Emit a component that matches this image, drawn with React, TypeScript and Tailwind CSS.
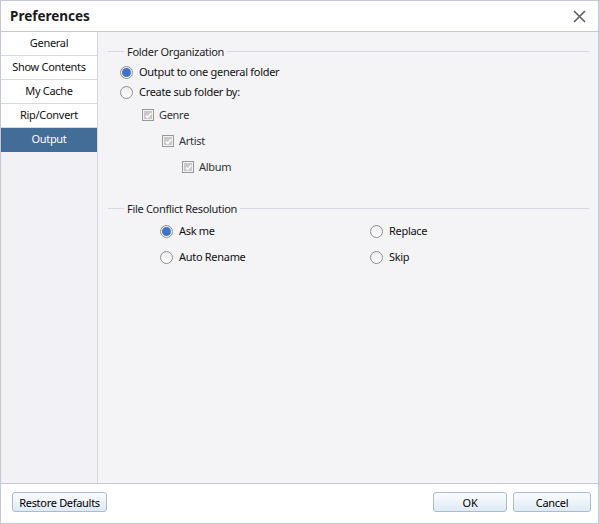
import React from 'react';

const font = { fontFamily: '"Noto Sans", "Liberation Sans", sans-serif' };

function Radio({ checked, label }: { checked?: boolean; label: string }) {
  return (
    <div className="flex items-center h-[20px]">
      <span className="w-[13px] h-[13px] rounded-full border border-[#8e8f8f] bg-gradient-to-b from-[#ececec] to-white flex items-center justify-center">
        {checked && <span className="w-[9px] h-[9px] rounded-full bg-[#3f74c9]" />}
      </span>
      <span className="ml-[6px] text-[11px] tracking-[-0.3px] text-[#111] whitespace-nowrap">{label}</span>
    </div>
  );
}

function Check({ label }: { label: string }) {
  return (
    <div className="flex items-center h-[20px]">
      <span className="w-[12px] h-[12px] border border-[#999] bg-[#f2f2f2] p-px flex">
        <span className="flex-1 bg-[#c9c9c9] flex items-center justify-center">
          <svg width="7" height="7" viewBox="0 0 7 7">
            <path d="M0.8 3.6 L2.7 5.4 L6.2 1.2" fill="none" stroke="#ffffff" strokeWidth="1.5" />
          </svg>
        </span>
      </span>
      <span className="ml-[5px] text-[11px] tracking-[-0.3px] text-[#333] whitespace-nowrap">{label}</span>
    </div>
  );
}

function Legend({ title }: { title: string }) {
  return (
    <div className="flex items-center h-[14px]">
      <div className="w-[16px] h-px bg-[#d8d8e2]" />
      <span className="px-[3px] text-[11px] tracking-[-0.3px] text-[#1e1e1e] leading-none whitespace-nowrap">{title}</span>
      <div className="flex-1 h-px bg-[#d8d8e2]" />
    </div>
  );
}

function Button({ children, className }: { children: React.ReactNode; className: string }) {
  return (
    <button className={`h-[20px] rounded-[3px] border border-[#a9bccf] bg-gradient-to-b from-[#fbfdff] to-[#dfeaf4] text-[11px] tracking-[-0.3px] text-black leading-none whitespace-nowrap ${className}`}>
      {children}
    </button>
  );
}

const tabs = ['General', 'Show Contents', 'My Cache', 'Rip/Convert', 'Output'];

export default function App() {
  return (
    <div style={font} className="w-[599px] h-[524px] border border-[#c4c7d8] flex flex-col bg-white overflow-hidden">
      <div className="h-[31px] shrink-0 border-b border-[#c4c7d8] flex items-center justify-between pl-[9px] pr-[12px]">
        <span className="text-[13.5px] font-bold text-[#1a1a1a]">Preferences</span>
        <svg width="13" height="13" viewBox="0 0 13 13">
          <path d="M1 1 L12 12 M12 1 L1 12" stroke="#5f5f5f" strokeWidth="1.6" />
        </svg>
      </div>
      <div className="flex-1 flex min-h-0">
        <div className="w-[97px] shrink-0 border-r border-[#d5d8e3] bg-[#f2f2f6]">
          {tabs.map((t) => (
            <div
              key={t}
              className={`h-[24px] flex items-center justify-center text-[11px] tracking-[-0.3px] border-b ${
                t === 'Output' ? 'bg-[#436c96] text-white border-[#436c96]' : 'bg-white text-[#111] border-[#d5d8e3]'
              }`}
            >
              {t}
            </div>
          ))}
        </div>
        <div className="flex-1 bg-[#f4f4f7] pl-[10px] pr-[9px] pt-[12px]">
          <Legend title="Folder Organization" />
          <div className="ml-[12px] mt-[4px]">
            <Radio checked label="Output to one general folder" />
            <Radio label="Create sub folder by:" />
          </div>
          <div className="ml-[34px] mt-[3px]">
            <Check label="Genre" />
          </div>
          <div className="ml-[54px] mt-[6px]">
            <Check label="Artist" />
          </div>
          <div className="ml-[74px] mt-[6px]">
            <Check label="Album" />
          </div>
          <div className="mt-[24px]">
            <Legend title="File Conflict Resolution" />
          </div>
          <div className="ml-[52px] mt-[6px] grid grid-cols-[210px_1fr] gap-y-[6px]">
            <Radio checked label="Ask me" />
            <Radio label="Replace" />
            <Radio label="Auto Rename" />
            <Radio label="Skip" />
          </div>
        </div>
      </div>
      <div className="h-[40px] shrink-0 border-t border-[#c4c7d8] flex items-start pt-[8px] pl-[11px] pr-[7px]">
        <Button className="w-[95px]">Restore Defaults</Button>
        <div className="flex-1" />
        <Button className="w-[74px]">OK</Button>
        <Button className="w-[78px] ml-[6px]">Cancel</Button>
      </div>
    </div>
  );
}
